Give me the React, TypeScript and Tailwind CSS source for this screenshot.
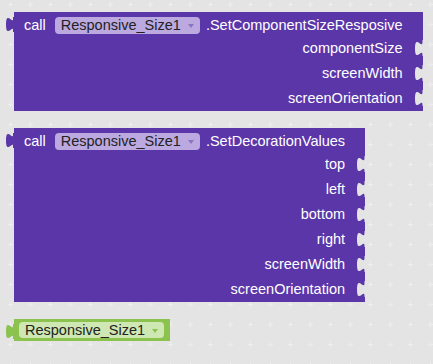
import React from "react";

const PURPLE = "#5b36a9";
const BG = "#e4e4e4";
const TAB = "M8,5 c0,10 -8,-8 -8,7.5 s8,-2.5 8,7.5 Z";

function Notch() {
  return (
    <svg width="8" height="20" viewBox="0 0 8 20" className="shrink-0 block -mt-[5px]">
      <path d={TAB} fill={BG} />
      <rect x="7.5" y="4" width="0.5" height="17" fill={BG} />
    </svg>
  );
}

function OutTab({ color }: { color: string }) {
  return (
    <svg width="9" height="20" viewBox="0 0 9 20" className="absolute -left-[8px] top-0">
      <path d={TAB} fill={color} />
      <rect x="7" y="5" width="2" height="15" fill={color} />
    </svg>
  );
}

function Arrow({ color }: { color: string }) {
  return (
    <svg width="6" height="4" viewBox="0 0 6 4" className="ml-[7px] mt-[1px] shrink-0">
      <path d="M0,0 H6 L3,4 Z" fill={color} />
    </svg>
  );
}

function Field({ bg, arrow, h }: { bg: string; arrow: string; h: string }) {
  return (
    <div className={`flex items-center ${h} rounded-[4px] pl-[6px] pr-[6px] ${bg} text-[#222]`}>
      <span className="leading-none">Responsive_Size1</span>
      <Arrow color={arrow} />
    </div>
  );
}

function CallBlock({ method, inputs }: { method: string; inputs: string[] }) {
  return (
    <div className="relative flex flex-col bg-[#5b36a9] text-white">
      <OutTab color={PURPLE} />
      <div className="flex items-center h-[24px] pt-[2px] pl-[10px] pr-[20px]">
        <span className="leading-none">call</span>
        <div className="ml-[9px]">
          <Field bg="bg-[#bba9e0]" arrow="#8a74c4" h="h-[17px]" />
        </div>
        <span className="ml-[6px] leading-none">{method}</span>
      </div>
      {inputs.map((t) => (
        <div key={t} className="flex items-center justify-end h-[25px]">
          <span className="leading-none">{t}</span>
          <div className="ml-[12px] flex items-center">
            <Notch />
          </div>
        </div>
      ))}
    </div>
  );
}

export default function App() {
  return (
    <div
      className="relative w-[433px] h-[364px] overflow-hidden bg-[#e4e4e4] text-[14.5px]"
      style={{ fontFamily: '"Liberation Sans", Arial, sans-serif' }}
    >
      <svg className="absolute inset-0" width="433" height="364">
        <defs>
          <pattern id="grid" width="20" height="20" patternUnits="userSpaceOnUse">
            <rect x="8" y="4" width="5" height="1" fill="#eeeeee" />
            <rect x="10" y="2" width="1" height="5" fill="#eeeeee" />
          </pattern>
        </defs>
        <rect width="433" height="364" fill="url(#grid)" />
      </svg>
      <div className="relative flex flex-col items-start pl-[14px] pt-[12px]">
        <CallBlock
          method=".SetComponentSizeResposive"
          inputs={["componentSize", "screenWidth", "screenOrientation"]}
        />
        <div className="mt-[17px]">
          <CallBlock
            method=".SetDecorationValues"
            inputs={["top", "left", "bottom", "right", "screenWidth", "screenOrientation"]}
          />
        </div>
        <div className="mt-[17px] relative flex items-center h-[22px] pl-[5px] pr-[6px] bg-[#8cc34f]">
          <OutTab color="#8cc34f" />
          <Field bg="bg-[#cfe7b2]" arrow="#8cc34f" h="h-[16px]" />
        </div>
      </div>
    </div>
  );
}
